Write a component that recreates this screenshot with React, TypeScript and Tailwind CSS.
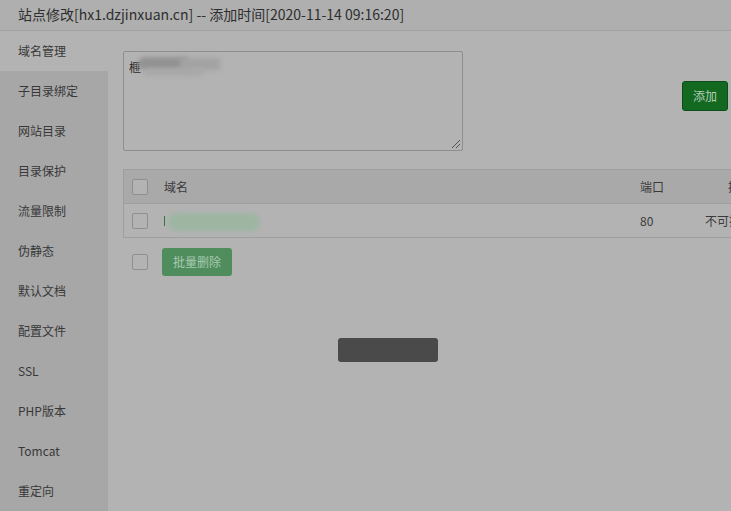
const menu = [
  "域名管理",
  "子目录绑定",
  "网站目录",
  "目录保护",
  "流量限制",
  "伪静态",
  "默认文档",
  "配置文件",
  "SSL",
  "PHP版本",
  "Tomcat",
  "重定向",
];

const Checkbox = () => (
  <span className="block h-4 w-4 rounded-[2px] border border-[#8f8f8f] bg-[#b3b3b3]" />
);

export default function App() {
  return (
    <div
      className="relative h-[511px] w-[731px] overflow-hidden bg-[#b3b3b3] text-[#3a3a3a]"
      style={{ fontFamily: '"Noto Sans CJK SC", "Liberation Sans", sans-serif' }}
    >
      <div className="flex h-[31px] items-center border-b border-[#a2a2a2] bg-[#afafaf] pb-[2px] pl-[18px] text-[14px] text-[#2e2e2e]">
        站点修改[hx1.dzjinxuan.cn] -- 添加时间[2020-11-14 09:16:20]
      </div>

      <div className="flex">
        <div className="w-[108px] shrink-0 bg-[#a7a7a7]">
          {menu.map((m, i) => (
            <div
              key={m}
              className={`flex h-[40px] items-center pl-[18px] text-[12px] text-[#383838] ${
                i === 0 ? "bg-[#b3b3b3]" : ""
              }`}
            >
              {m}
            </div>
          ))}
        </div>

        <div className="min-w-0 flex-1 pl-[15px] pt-[20px]">
          <div className="flex items-start">
            <div className="relative h-[100px] w-[340px] rounded-[2px] border border-[#8e8e8e] bg-[#b3b3b3]">
              <span className="absolute left-[5px] top-[6px] text-[12px] text-[#2a2a2a]">榧</span>
              <div className="absolute left-[14px] top-[5px] h-[13px] w-[50px] rounded-l-full bg-[#939393] blur-[2px]" />
              <div className="absolute left-[56px] top-[6px] h-[12px] w-[40px] bg-[#a3a3a3] blur-[2px]" />
              <div className="absolute left-[20px] top-[16px] h-[8px] w-[60px] rounded-full bg-[#a8a8a8] blur-[2px]" />
              <div className="absolute bottom-[2px] right-[2px] h-[8px] w-[8px] bg-[linear-gradient(135deg,transparent_45%,#555_45%,#555_55%,transparent_55%,transparent_70%,#555_70%,#555_80%,transparent_80%)]" />
            </div>
            <button className="ml-[219px] mt-[30px] h-[30px] w-[46px] shrink-0 rounded-[3px] border border-[#0b4f17] bg-[#12691f] text-[12px] text-[#b5cdb9]">
              添加
            </button>
          </div>

          <div className="mt-[18px] w-[640px] border border-[#9e9e9e] text-[12px]">
            <div className="flex h-[34px] items-center border-b border-[#9e9e9e] bg-[#a9a9a9]">
              <span className="ml-[8px]">
                <Checkbox />
              </span>
              <span className="ml-[16px] w-[476px] text-[#3a3a3a]">域名</span>
              <span className="w-[65px] text-[#3a3a3a]">端口</span>
              <span className="ml-[23px] whitespace-nowrap text-[#3a3a3a]">操作</span>
            </div>
            <div className="flex h-[33px] items-center">
              <span className="ml-[8px]">
                <Checkbox />
              </span>
              <span className="relative ml-[16px] h-[14px] w-[476px]">
                <span className="absolute left-0 top-[2px] h-[10px] w-[1px] bg-[#2a7a3a]" />
                <span className="absolute left-[4px] top-[-1px] h-[18px] w-[92px] rounded-full bg-[#9db6a2] blur-[2px]" />
              </span>
              <span className="w-[65px] text-[#3a3a3a]">80</span>
              <span className="whitespace-nowrap text-[#3a3a3a]">不可操作</span>
            </div>
          </div>

          <div className="mt-[10px] flex items-center">
            <span className="ml-[9px]">
              <Checkbox />
            </span>
            <button className="ml-[14px] h-[28px] w-[70px] rounded-[3px] bg-[#4f8d5c] text-[12px] text-[#a9c9b0]">
              批量删除
            </button>
          </div>
        </div>
      </div>

      <div className="absolute left-[338px] top-[338px] h-[24px] w-[100px] rounded-[3px] bg-[#4a4a4a]" />
    </div>
  );
}
